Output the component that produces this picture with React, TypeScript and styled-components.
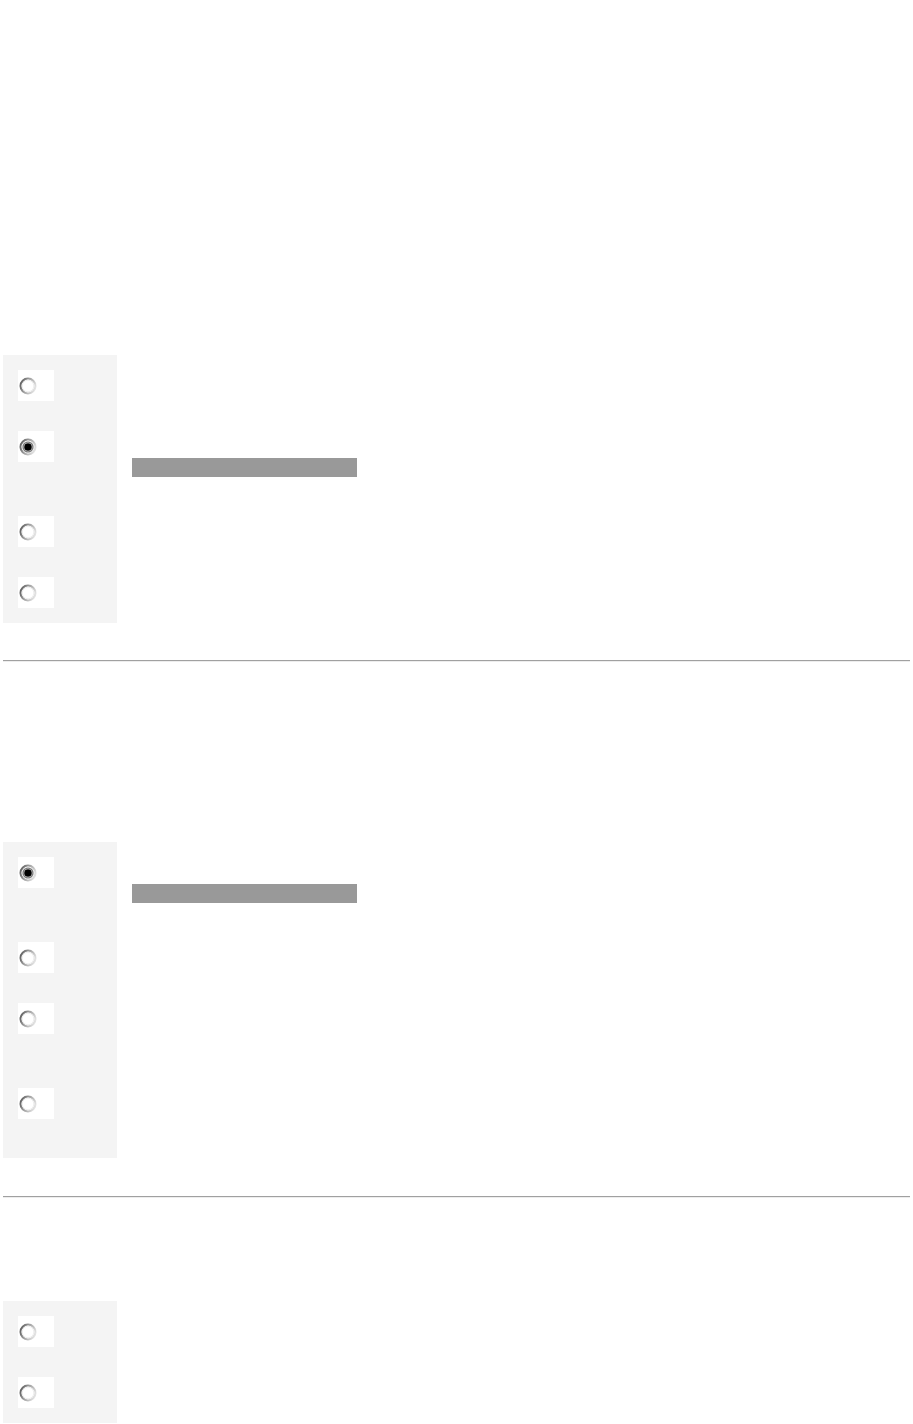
import React, { useId } from "react";
import styled, { createGlobalStyle } from "styled-components";

const Global = createGlobalStyle`
  html, body { margin: 0; padding: 0; background: #ffffff; }
  body { font-family: "Liberation Sans", Arial, sans-serif; font-size: 13px; color: #000; }
`;

const Page = styled.main`
  padding: 0 3px;
`;

const Section = styled.section`
  display: flex;
  flex-direction: column;
`;

const QuestionArea = styled.div<{ $h: number }>`
  height: ${(p) => p.$h}px;
`;

const AnswerTable = styled.div`
  display: flex;
  flex-direction: column;
  width: 100%;
`;

const Row = styled.div`
  display: grid;
  grid-template-columns: 114px 1fr;
`;

const RadioCell = styled.div`
  background: #f4f4f4;
  padding: 15px 0 0 15px;
`;

const RadioBox = styled.label`
  display: flex;
  align-items: center;
  width: 36px;
  height: 31px;
  background: #ffffff;
  padding-left: 1px;
  box-sizing: border-box;
`;

const ContentCell = styled.div<{ $h: number }>`
  min-height: ${(p) => p.$h}px;
  padding: 42px 15px 0 15px;
  box-sizing: border-box;
`;

const Bar = styled.div`
  width: 225px;
  height: 19px;
  background: #999999;
`;

const Rule = styled.hr<{ $top: number }>`
  margin: ${(p) => p.$top}px 0 0 0;
  height: 0;
  border: 0;
  border-top: 1px solid #a0a0a0;
  border-bottom: 1px solid #ededed;
`;

function Radio({ checked }: { checked?: boolean }) {
  const id = useId().replace(/:/g, "");
  return (
    <svg width="18" height="18" viewBox="0 0 18 18" aria-hidden="true">
      <defs>
        <linearGradient id={`g${id}`} x1="0" y1="0.2" x2="1" y2="0.6">
          <stop offset="0" stopColor="#5e5e5e" />
          <stop offset="0.45" stopColor="#a0a0a0" />
          <stop offset="1" stopColor="#e2e2e2" />
        </linearGradient>
      </defs>
      <circle cx="9" cy="9" r="7.5" fill="#ffffff" stroke={`url(#g${id})`} strokeWidth="2" />
      <circle cx="9" cy="9" r="5.8" fill="none" stroke="#eeeeee" strokeWidth="1" />
      {checked && (
        <>
          <circle cx="9" cy="9" r="4.9" fill="none" stroke="#7a7a7a" strokeWidth="1.3" />
          <circle cx="9" cy="9" r="3.8" fill="#000000" />
        </>
      )}
    </svg>
  );
}

type Answer = { h: number; checked?: boolean; bar?: boolean };

function Answers({ items }: { items: Answer[] }) {
  return (
    <AnswerTable>
      {items.map((a, i) => (
        <Row key={i}>
          <RadioCell>
            <RadioBox>
              <Radio checked={a.checked} />
            </RadioBox>
          </RadioCell>
          <ContentCell $h={a.h}>{a.bar && <Bar />}</ContentCell>
        </Row>
      ))}
    </AnswerTable>
  );
}

export default function App() {
  return (
    <>
      <Global />
      <Page>
        <Section>
          <QuestionArea $h={355} />
          <Answers
            items={[
              { h: 61 },
              { h: 85, checked: true, bar: true },
              { h: 61 },
              { h: 61 },
            ]}
          />
        </Section>
        <Rule $top={37} />
        <Section>
          <QuestionArea $h={180} />
          <Answers
            items={[
              { h: 85, checked: true, bar: true },
              { h: 61 },
              { h: 85 },
              { h: 85 },
            ]}
          />
        </Section>
        <Rule $top={38} />
        <Section>
          <QuestionArea $h={103} />
          <Answers items={[{ h: 61 }, { h: 61 }]} />
        </Section>
      </Page>
    </>
  );
}
